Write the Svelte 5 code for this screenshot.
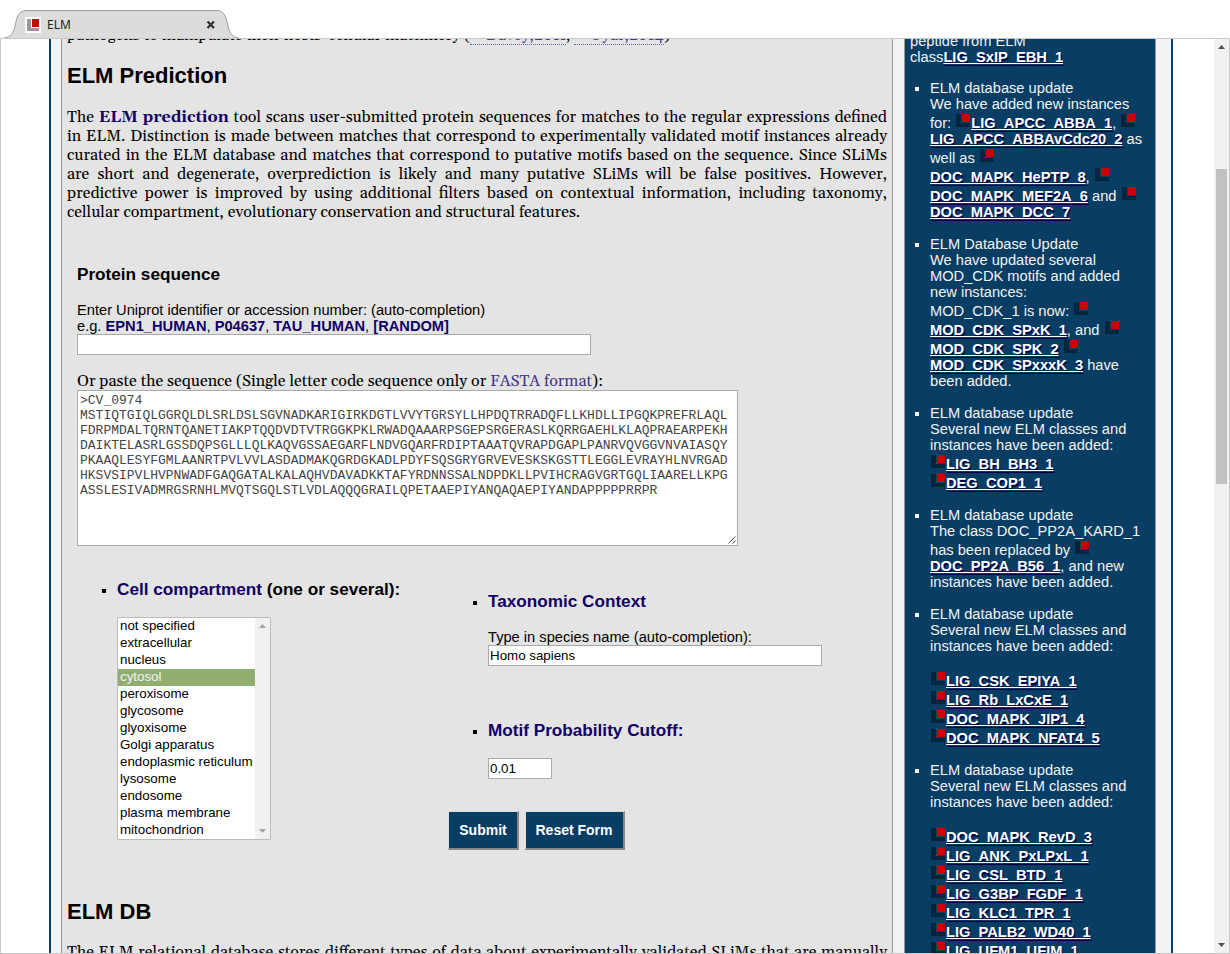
<script>
  const news = [
    [
      ['ELM database update'],
      ['We have added new instances'],
      ['for: ', { i: 1 }, { a: 'LIG_APCC_ABBA_1' }, ', ', { i: 1 }],
      [{ a: 'LIG_APCC_ABBAvCdc20_2' }, ' as'],
      ['well as ', { i: 1 }],
      [{ a: 'DOC_MAPK_HePTP_8' }, ', ', { i: 1 }],
      [{ a: 'DOC_MAPK_MEF2A_6' }, ' and ', { i: 1 }],
      [{ a: 'DOC_MAPK_DCC_7' }]
    ],
    [
      ['ELM Database Update'],
      ['We have updated several'],
      ['MOD_CDK motifs and added'],
      ['new instances:'],
      ['MOD_CDK_1 is now: ', { i: 1 }],
      [{ a: 'MOD_CDK_SPxK_1' }, ', and ', { i: 1 }],
      [{ a: 'MOD_CDK_SPK_2' }, ' ', { i: 1 }],
      [{ a: 'MOD_CDK_SPxxxK_3' }, ' have'],
      ['been added.']
    ],
    [
      ['ELM database update'],
      ['Several new ELM classes and'],
      ['instances have been added:'],
      [{ i: 1 }, { a: 'LIG_BH_BH3_1' }],
      [{ i: 1 }, { a: 'DEG_COP1_1' }]
    ],
    [
      ['ELM database update'],
      ['The class DOC_PP2A_KARD_1'],
      ['has been replaced by ', { i: 1 }],
      [{ a: 'DOC_PP2A_B56_1' }, ', and new'],
      ['instances have been added.']
    ],
    [
      ['ELM database update'],
      ['Several new ELM classes and'],
      ['instances have been added:'],
      [],
      [{ i: 1 }, { a: 'LIG_CSK_EPIYA_1' }],
      [{ i: 1 }, { a: 'LIG_Rb_LxCxE_1' }],
      [{ i: 1 }, { a: 'DOC_MAPK_JIP1_4' }],
      [{ i: 1 }, { a: 'DOC_MAPK_NFAT4_5' }]
    ],
    [
      ['ELM database update'],
      ['Several new ELM classes and'],
      ['instances have been added:'],
      [],
      [{ i: 1 }, { a: 'DOC_MAPK_RevD_3' }],
      [{ i: 1 }, { a: 'LIG_ANK_PxLPxL_1' }],
      [{ i: 1 }, { a: 'LIG_CSL_BTD_1' }],
      [{ i: 1 }, { a: 'LIG_G3BP_FGDF_1' }],
      [{ i: 1 }, { a: 'LIG_KLC1_TPR_1' }],
      [{ i: 1 }, { a: 'LIG_PALB2_WD40_1' }],
      [{ i: 1 }, { a: 'LIG_UFM1_UFIM_1' }]
    ]
  ];
  const cells = ['not specified', 'extracellular', 'nucleus', 'cytosol', 'peroxisome', 'glycosome', 'glyoxisome', 'Golgi apparatus', 'endoplasmic reticulum', 'lysosome', 'endosome', 'plasma membrane', 'mitochondrion'];
  const sequence = `>CV_0974
MSTIQTGIQLGGRQLDLSRLDSLSGVNADKARIGIRKDGTLVVYTGRSYLLHPDQTRRADQFLLKHDLLIPGQKPREFRLAQL
FDRPMDALTQRNTQANETIAKPTQQDVDTVTRGGKPKLRWADQAAARPSGEPSRGERASLKQRRGAEHLKLAQPRAEARPEKH
DAIKTELASRLGSSDQPSGLLLQLKAQVGSSAEGARFLNDVGQARFRDIPTAAATQVRAPDGAPLPANRVQVGGVNVAIASQY
PKAAQLESYFGMLAANRTPVLVVLASDADMAKQGRDGKADLPDYFSQSGRYGRVEVESKSKGSTTLEGGLEVRAYHLNVRGAD
HKSVSIPVLHVPNWADFGAQGATALKALAQHVDAVADKKTAFYRDNNSSALNDPDKLLPVIHCRAGVGRTGQLIAARELLKPG
ASSLESIVADMRGSRNHLMVQTSGQLSTLVDLAQQQGRAILQPETAAEPIYANQAQAEPIYANDAPPPPPRRPR`;
</script>

<div class="window">
  <header>
    <svg class="tab" width="240" height="39" viewBox="0 0 240 39">
      <path d="M0 39C9 38.500 13 35 15 27C17 17 18 10.500 27 10.500H216C225 10.500 226 17 228.500 27C230 34 232 38 240 38.500V39Z" fill="#dcdcdc" />
      <path d="M4 38C11 37 13.500 33 15 26C17 17 18 10.500 27 10.500H216C225 10.500 226 17 228 26C229.500 33 232 37 239 38" fill="none" stroke="#999da3" />
      <path d="M25 17H41V33H25Z" fill="#fff" />
      <path d="M27 19H31V28H39V31H27Z" fill="#999" />
      <path d="M32 19H39V27H32Z" fill="#c00" />
      <path d="M207.500 21.500L214 28M214 21.500L207.500 28" stroke="#333" stroke-width="2.400" />
    </svg>
    <span class="tabname">ELM</span>
  </header>
  <div class="view">
    <div class="page">
      <main>
        <p class="line intro"><span>pathogens to manipulate their hosts' cellular machinery (</span><a class="ref r1" href="#davey">Davey,2011</a><span class="comma">, </span><a class="ref r2" href="#uyar">Uyar,2014</a><span>)</span></p>
        <h2>ELM Prediction</h2>
        <div class="text">
          <p class="line">The <b>ELM prediction</b> tool scans user-submitted protein sequences for matches to the regular expressions defined</p>
          <p class="line">in ELM. Distinction is made between matches that correspond to experimentally validated motif instances already</p>
          <p class="line">curated in the ELM database and matches that correspond to putative motifs based on the sequence. Since SLiMs</p>
          <p class="line">are short and degenerate, overprediction is likely and many putative SLiMs will be false positives. However,</p>
          <p class="line">predictive power is improved by using additional filters based on contextual information, including taxonomy,</p>
          <p class="line last">cellular compartment, evolutionary conservation and structural features.</p>
        </div>
        <form>
          <h3>Protein sequence</h3>
          <div class="hint">Enter Uniprot identifier or accession number: (auto-completion)<br />e.g. <b>EPN1_HUMAN</b>, <b>P04637</b>, <b>TAU_HUMAN</b>, <b>[RANDOM]</b></div>
          <div class="input uniprot"></div>
          <p class="line paste">Or paste the sequence (Single letter code sequence only or <a href="#fasta">FASTA format</a>):</p>
          <div class="area"><pre>{sequence}</pre>
            <svg width="8" height="8" viewBox="0 0 8 8"><path d="M0.500 7.500L7.500 0.500M4.500 7.500L7.500 4.500" stroke="#555" /></svg>
          </div>
          <div class="cols">
            <section class="left">
              <h3 class="item"><b>Cell compartment</b> (one or several):</h3>
              <div class="select">
                <div class="opts">
                  {#each cells as c}<div class:sel={c === 'cytosol'}>{c}</div>{/each}
                </div>
                <div class="bar">
                  <svg width="7" height="4" viewBox="0 0 7 4"><path d="M0 4L3.500 0L7 4Z" fill="#a3a3a3" /></svg>
                  <svg width="7" height="4" viewBox="0 0 7 4"><path d="M0 0L3.500 4L7 0Z" fill="#a3a3a3" /></svg>
                </div>
              </div>
            </section>
            <section class="right">
              <h3 class="item"><b>Taxonomic Context</b></h3>
              <div class="hint">Type in species name (auto-completion):</div>
              <div class="input species">Homo sapiens</div>
              <h3 class="item"><b>Motif Probability Cutoff:</b></h3>
              <div class="input cutoff">0.01</div>
              <div class="buttons"><button type="button">Submit</button><button type="button" class="reset">Reset Form</button></div>
            </section>
          </div>
        </form>
        <h2 class="db">ELM DB</h2>
        <p class="line">The ELM relational database stores different types of data about experimentally validated SLiMs that are manually</p>
      </main>
      <aside>
        <div class="tail">peptide from ELM<br />class<a href="#ebh">LIG_SxIP_EBH_1</a></div>
        <ul>
          {#each news as item}
            <li>
              {#each item as row}
                <div class="row">{#each row as part}{#if part.a}<a href="#elm">{part.a}</a>{:else if part.i}<svg class="ico" width="16" height="16" viewBox="0 0 16 16"><path d="M1 2H6V11H15V15H1Z" fill="#06243b" /><path d="M7 2H15V10H7Z" fill="#c00" /></svg>{:else}{part}{/if}{/each}</div>
              {/each}
            </li>
          {/each}
        </ul>
      </aside>
    </div>
    <div class="scroll">
      <svg width="7" height="4" viewBox="0 0 7 4"><path d="M0 4L3.500 0L7 4Z" fill="#505050" /></svg>
      <div class="thumb"></div>
      <svg width="7" height="4" viewBox="0 0 7 4"><path d="M0 0L3.500 4L7 0Z" fill="#505050" /></svg>
    </div>
  </div>
</div>

<style>
  * { box-sizing: border-box; }
  .window { width: 1230px; height: 954px; overflow: hidden; background: #fff; font: 14.67px/16px "Liberation Sans", Arial, sans-serif; color: #000; display: flex; flex-direction: column; }
  header { height: 38px; display: flex; flex: none; }
  .tab { flex: none; margin-right: -193px; }
  .tabname { font: 12px/16px "Noto Sans", sans-serif; color: #222; padding-top: 17px; position: relative; }
  .view { height: 916px; border: 1px solid #c8c8c8; display: flex; justify-content: space-between; overflow: hidden; }
  .page { margin-left: 48px; width: 1124px; height: 914px; border: solid #083d64; border-width: 0 2px; background: #f3f3f3; display: flex; padding-left: 10px; gap: 11px; overflow: hidden; }
  main { width: 832px; flex: none; height: 914px; overflow: hidden; border: solid #999; border-width: 0 1px; background: #e4e4e4; padding: 0 5px; }
  p, h2, h3, pre, ul { margin: 0; padding: 0; }
  .line { font: 16px/19px Gelasio, Georgia, "Liberation Serif", serif; height: 19px; width: 820px; white-space: nowrap; text-align: justify; text-align-last: justify; }
  .last { width: 513px; }
  .intro { margin-top: -13px; width: 603px; display: flex; }
  .intro > span:first-child { width: 403px; flex: none; }
  .ref { height: 19px; border-bottom: 1px dotted #66c; padding-left: 16px; }
  .r1 { width: 96px; }
  .r2 { width: 90px; }
  .comma { width: 8px; }
  b { color: #110066; }
  a { color: #443388; text-decoration: none; }
  h2 { font-size: 22px; line-height: 26px; margin-top: 18px; }
  .text { margin-top: 19px; }
  h3 { font-size: 17.16px; line-height: 20px; }
  form { padding: 42px 0 0 10px; height: 677px; }
  .hint { margin-top: 18px; white-space: nowrap; }
  .input { height: 21px; border: 1px solid #a9a9a9; background: #fff; font-size: 13.33px; line-height: 19px; padding-left: 1px; }
  .uniprot { width: 514px; }
  .paste { margin-top: 17px; margin-bottom: -1px; width: 526px; }
  .area { width: 661px; height: 156px; border: 1px solid #a9a9a9; background: #fff; padding: 2px; position: relative; }
  .area svg { position: absolute; right: 1px; bottom: 1px; }
  pre { font: 13px/15px "Liberation Mono", monospace; color: #444; }
  .cols { display: flex; }
  .left { width: 371px; padding: 33px 0 0 40px; }
  .right { padding: 45px 0 0 40px; }
  .item { display: flex; white-space: pre; }
  .item::before { content: ""; width: 4px; height: 4px; background: #000; margin: 10px 11px 0 -15px; }
  .select { width: 154px; height: 223px; border: 1px solid #bbb; border-radius: 1px; margin-top: 18px; display: flex; background: #fff; font-size: 13.33px; line-height: 17px; }
  .opts { width: 137px; white-space: nowrap; }
  .opts div { padding-left: 2px; height: 17px; line-height: 16px; }
  .opts .sel { background: #8fae70; color: #f3f3f3; }
  .bar { width: 15px; background: #f1f1f1; display: flex; flex-direction: column; justify-content: space-between; align-items: center; padding: 6px 0; }
  .species { width: 334px; margin-bottom: 54px; }
  .cutoff { width: 64px; margin-top: 18px; }
  .buttons { display: flex; gap: 6px; margin: 32px 0 0 -40px; }
  button { width: 71px; height: 39px; padding: 0 0 1px; border: 2px solid; border-color: #ddd #888 #888 #ddd; border-left-width: 1px; border-top-width: 1px; background: #083d64; color: #fff; font: bold 14px/16px "Liberation Sans", Arial, sans-serif; }
  .reset { width: 100px; padding-right: 1px; }
  .db { margin-top: 0; margin-bottom: 18px; }
  aside { width: 252px; flex: none; height: 914px; overflow: hidden; border: solid #999; border-width: 0 1px; background: #083d64; color: #f3f3f3; }
  .tail { margin-top: -6px; padding-left: 5px; }
  aside a { color: #fff; font-weight: bold; text-decoration: underline; text-shadow: 1px 2px 1px #004; }
  ul { list-style: none; padding-left: 25px; margin-top: 15px; }
  li { margin-bottom: 16px; position: relative; }
  li::before { content: ""; position: absolute; left: -15px; top: 7px; width: 4px; height: 4px; background: #fff; }
  .row { min-height: 16px; white-space: pre; }
  .ico { vertical-align: baseline; }
  .scroll { width: 15px; background: #f1f1f1; display: flex; flex-direction: column; align-items: center; padding: 6px 0; }
  .scroll svg { flex: none; }
  .thumb { width: 11px; height: 315px; background: #c1c1c1; margin: 120px 0 auto; }
</style>
